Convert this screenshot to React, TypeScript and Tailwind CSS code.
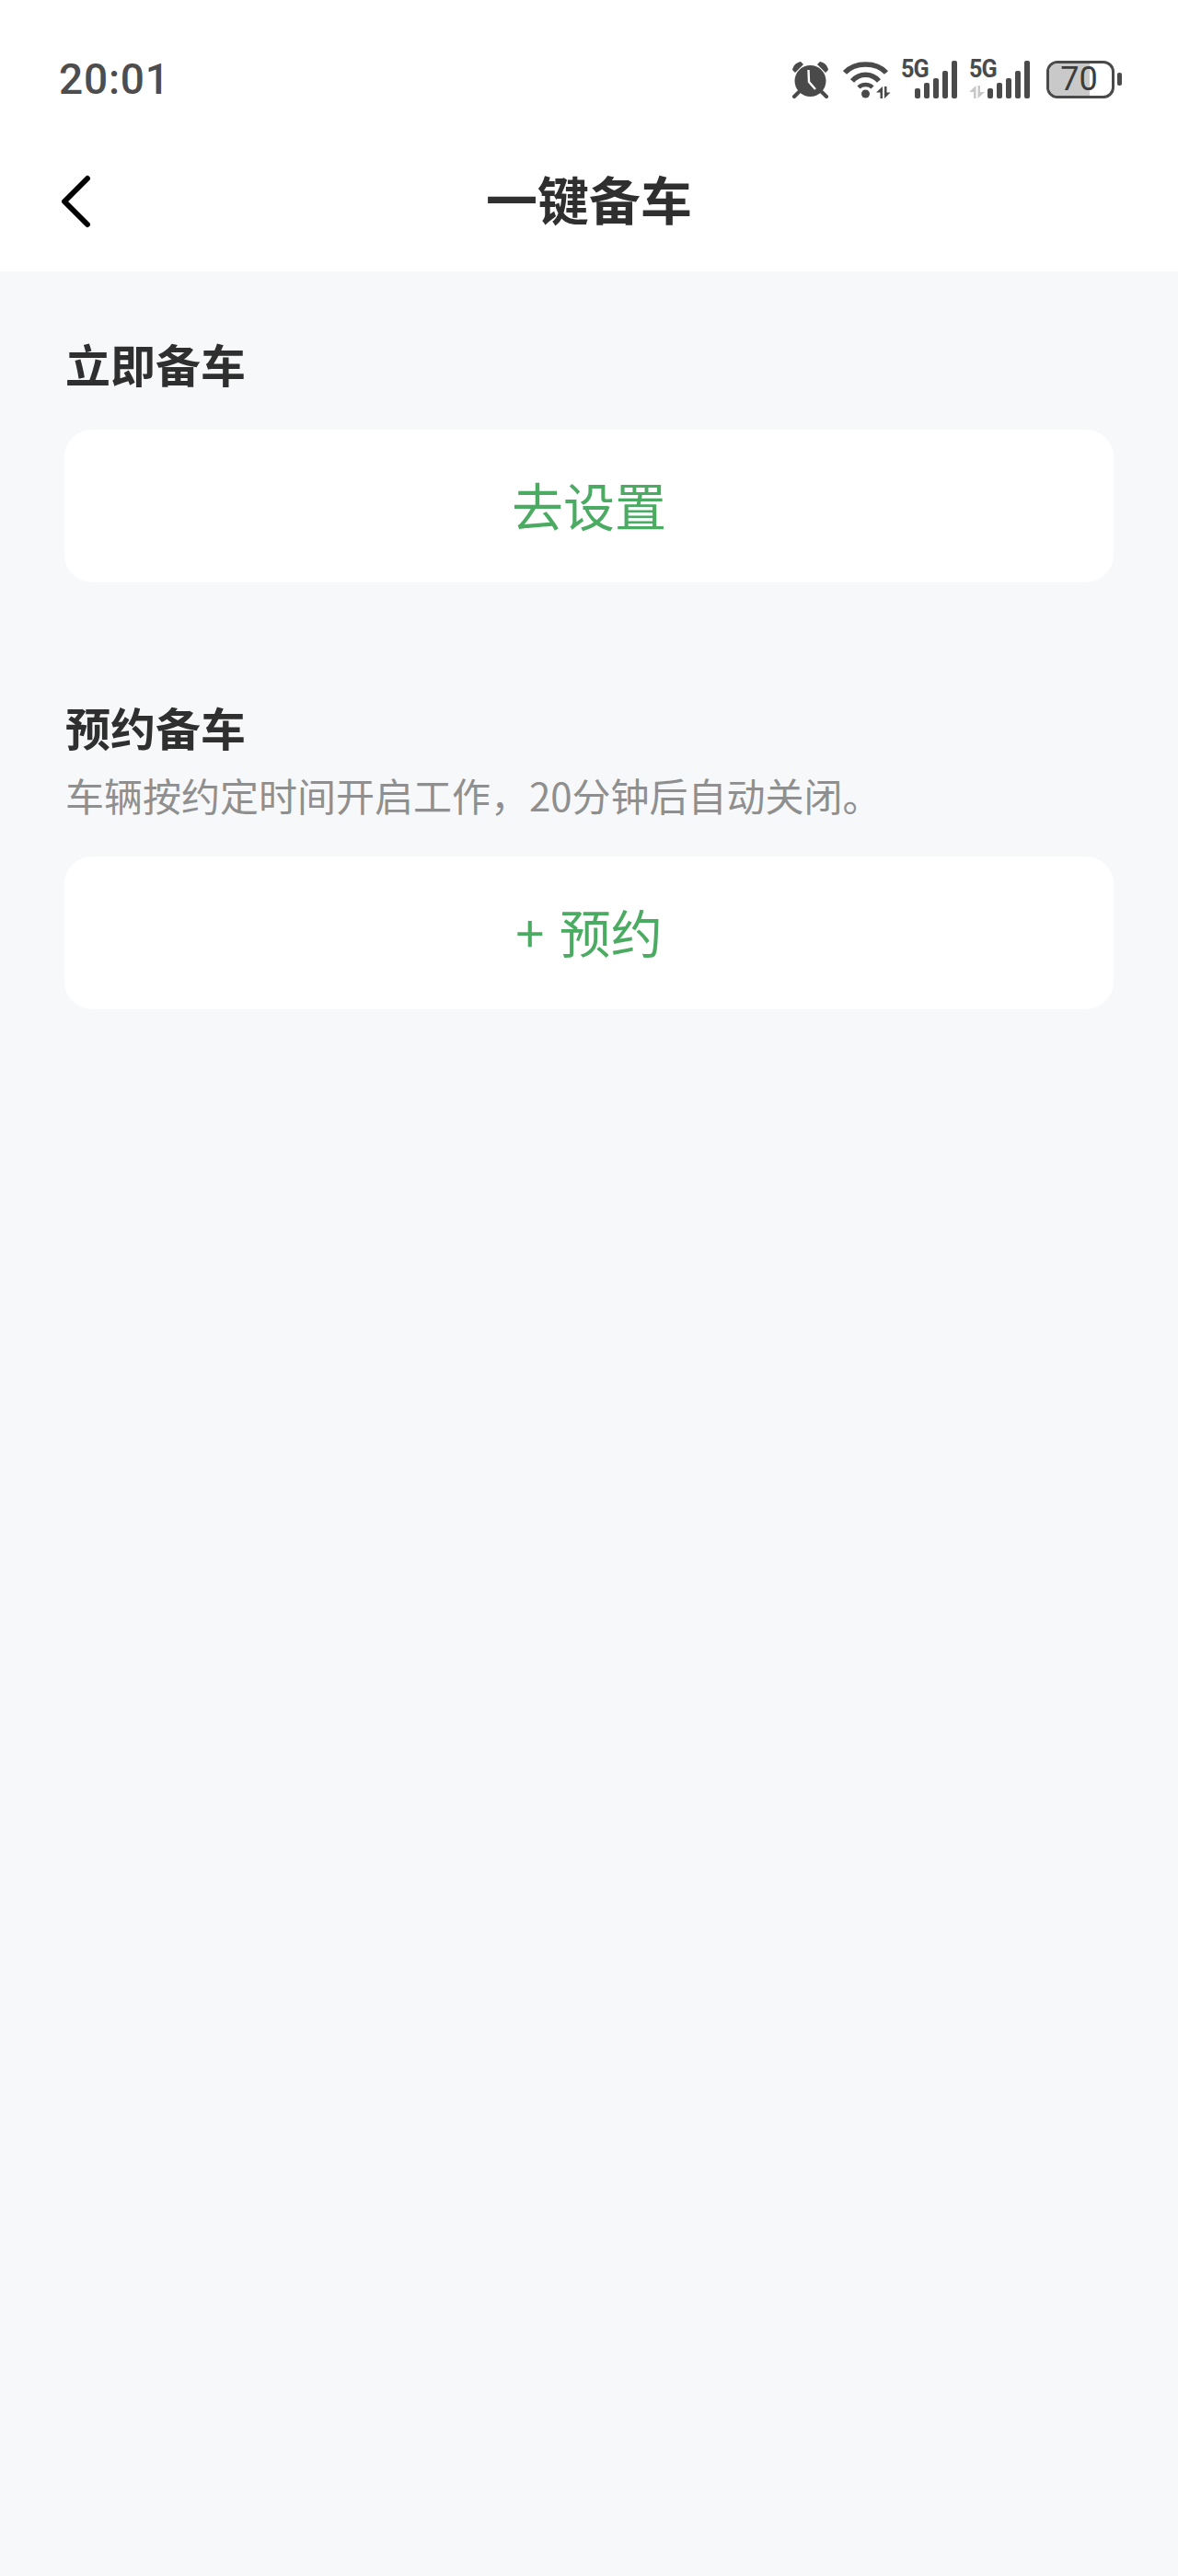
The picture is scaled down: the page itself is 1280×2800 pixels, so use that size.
const cjk = "font-['Noto_Sans_CJK_SC','Noto_Sans',sans-serif]";

function AlarmIcon() {
  return (
    <svg width="41" height="42" viewBox="0 0 41 42" className="text-[#4a4a4a]">
      <circle cx="20.5" cy="23" r="17" fill="currentColor" />
      <path d="M1 11 C2 6 5 3 10 2 L13 5 L4 14 Z" fill="currentColor" />
      <path d="M40 11 C39 6 36 3 31 2 L28 5 L37 14 Z" fill="currentColor" />
      <path d="M8 35 L3 40 M33 35 L38 40" fill="none" stroke="currentColor" strokeWidth="4" strokeLinecap="round" />
      <path d="M18.5 11 L19 24 L26 32" fill="none" stroke="white" strokeWidth="2.4" />
    </svg>
  );
}

function WifiIcon() {
  return (
    <svg width="52" height="42" viewBox="0 -2 52 42" className="text-[#4a4a4a]">
      <path d="M2 12 C13 0 36 0 47 12" fill="none" stroke="currentColor" strokeWidth="5.5" />
      <path d="M10 21 C18 12 31 12 39 21" fill="none" stroke="currentColor" strokeWidth="5.5" />
      <path d="M17 28 C21 24 28 24 32 28" fill="none" stroke="currentColor" strokeWidth="4.5" />
      <circle cx="24.5" cy="35" r="4.5" fill="currentColor" />
      <path d="M36 33.5 L43 27 V40 H40.5 V33.5 Z" fill="currentColor" />
      <path d="M45 27 H47.5 V33.5 H51.5 L45 40 Z" fill="currentColor" />
    </svg>
  );
}

function Signal({ arrows }: { arrows?: boolean }) {
  return (
    <div className={`relative h-[42px] ${arrows ? "w-[66px]" : "w-[61px]"}`}>
      <span className="absolute left-0 top-[-7px] font-['Roboto',sans-serif] font-bold text-[28px] leading-[34px] tracking-[-1px] text-[#4a4a4a] scale-x-[0.9] origin-left">
        5G
      </span>
      {arrows && (
        <svg width="17" height="14" viewBox="0 0 17 14" className="absolute left-0 bottom-0 text-[#c8c8c8]">
          <path d="M0 7 L7.5 0 V14 H5 V7 Z" fill="currentColor" />
          <path d="M9.5 0 H12 V7 H17 L9.5 14 Z" fill="currentColor" />
        </svg>
      )}
      <div className="absolute right-0 bottom-0 flex items-end gap-[4px]">
        <div className="w-[6px] h-[11px] rounded-[2px] bg-[#4a4a4a]" />
        <div className="w-[6px] h-[17px] rounded-[2px] bg-[#4a4a4a]" />
        <div className="w-[6px] h-[22px] rounded-[2px] bg-[#4a4a4a]" />
        <div className="w-[6px] h-[30px] rounded-[2px] bg-[#4a4a4a]" />
        <div className="w-[6px] h-[41px] rounded-[2px] bg-[#4a4a4a]" />
      </div>
    </div>
  );
}

function Battery() {
  return (
    <div className="flex items-center gap-[3px]">
      <div className="relative w-[74px] h-[41px] rounded-[12px] border-[3px] border-[#4a4a4a] overflow-hidden">
        <div className="h-full w-[44px] bg-[#c9c9c9]" />
        <span className="absolute inset-0 flex items-center justify-center pr-[3px] font-['Roboto',sans-serif] text-[36px] text-[#3c3c3c]">
          70
        </span>
      </div>
      <div className="w-[5px] h-[14px] rounded-[2px] bg-[#4a4a4a]" />
    </div>
  );
}

function Card({ label }: { label: string }) {
  return (
    <div className={`h-[166px] rounded-[30px] bg-white flex items-center justify-center pb-[5px] text-[56px] leading-none [word-spacing:4px] text-[#4cab62] ${cjk}`}>
      {label}
    </div>
  );
}

export default function App() {
  return (
    <div className="h-[2800px] w-[1280px] bg-[#f7f8fa]">
      <div className="bg-white h-[295px]">
        <div className="h-[150px] pl-[64px] pr-[61px] pt-[65px] flex items-start justify-between">
          <span className="font-['Roboto',sans-serif] font-medium text-[46px] leading-[42px] tracking-[0.8px] text-[#4d4d4d]">
            20:01
          </span>
          <div className="flex items-center">
            <AlarmIcon />
            <div className="w-[15px]" />
            <WifiIcon />
            <div className="w-[11px]" />
            <Signal />
            <div className="w-[13px]" />
            <Signal arrows />
            <div className="w-[18px]" />
            <Battery />
          </div>
        </div>
        <div className="relative h-[145px] flex items-center justify-center">
          <svg width="34" height="60" viewBox="0 0 34 60" className="absolute left-[65px] top-[40px]">
            <path d="M30 4 L5 29 L30 54" fill="none" stroke="#000" strokeWidth="6" strokeLinecap="round" strokeLinejoin="round" />
          </svg>
          <h1 className={`text-[56px] leading-none font-bold text-[#2f2f2f] pb-[15px] ${cjk}`}>一键备车</h1>
        </div>
      </div>
      <div className="px-[70px]">
        <h2 className={`mt-[75px] pl-[1px] text-[49px] leading-[50px] font-bold text-[#2f2f2f] ${cjk}`}>立即备车</h2>
        <div className="mt-[47px]">
          <Card label="去设置" />
        </div>
        <h2 className={`mt-[132px] pl-[1px] text-[49px] leading-[50px] font-bold text-[#2f2f2f] ${cjk}`}>预约备车</h2>
        <p className={`mt-[24px] pl-[1px] text-[42px] leading-[50px] text-[#8f8f8f] ${cjk}`}>
          车辆按约定时间开启工作，20分钟后自动关闭。
        </p>
        <div className="mt-[42px]">
          <Card label="+ 预约" />
        </div>
      </div>
    </div>
  );
}
